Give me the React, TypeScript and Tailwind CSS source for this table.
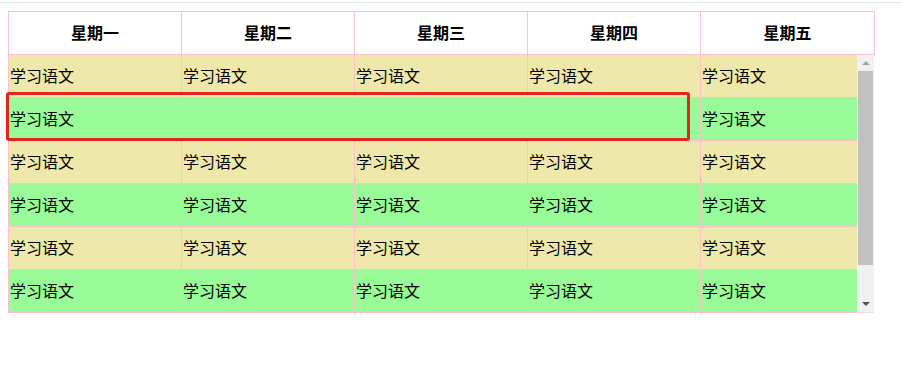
import React from "react";

const days = ["星期一", "星期二", "星期三", "星期四", "星期五"];
const beige = "bg-[#eee8aa]";
const green = "bg-[#98fb98]";

function Cell({ w, children }: { w: string; children?: React.ReactNode }) {
  return (
    <div className={`${w} h-full border-r border-[#ffc0cb] flex items-center pl-[1px] pb-[2px] shrink-0`}>
      {children}
    </div>
  );
}

export default function App() {
  const rows = [0, 1, 2, 3, 4, 5];
  return (
    <div
      className="w-[902px] h-[368px] bg-white text-black"
      style={{ fontFamily: '"Noto Sans CJK SC", "Noto Sans", sans-serif' }}
    >
      <div className="h-px mt-[2px] bg-[#e6e6e6]" />
      <div className="relative ml-[8px] mt-[8px] w-[867px] border-l border-t border-[#ffc0cb]">
        {/* header */}
        <div className="flex h-[43px] border-b border-[#ffc0cb] bg-white">
          {days.map((d, i) => (
            <div
              key={d}
              className={`${i === 4 ? "w-[174px]" : "w-[173px]"} h-full border-r border-[#ffc0cb] flex items-center justify-center pb-[2px] font-bold text-[16px] shrink-0`}
            >
              {d}
            </div>
          ))}
        </div>
        {/* body */}
        <div className="flex">
          <div className="flex flex-col w-[848px]">
            {rows.map((r) => (
              <div
                key={r}
                className={`flex h-[43px] border-b border-[#ffc0cb] text-[16px] ${r % 2 === 0 ? beige : green}`}
              >
                {r === 1 ? (
                  <>
                    <Cell w="w-[692px]">学习语文</Cell>
                    <div className="w-[156px] h-full flex items-center pl-[1px] pb-[2px]">学习语文</div>
                  </>
                ) : (
                  <>
                    <Cell w="w-[173px]">学习语文</Cell>
                    <Cell w="w-[173px]">学习语文</Cell>
                    <Cell w="w-[173px]">学习语文</Cell>
                    <Cell w="w-[173px]">学习语文</Cell>
                    <div className="w-[156px] h-full flex items-center pl-[1px] pb-[2px]">学习语文</div>
                  </>
                )}
              </div>
            ))}
          </div>
          <div className="w-[17px] h-[258px] bg-[#f1f1f1] flex flex-col items-center border-b border-[#f5dde2]">
            <div className="h-[16px] w-full flex items-center justify-center">
              <div className="w-0 h-0 border-l-[4px] border-r-[4px] border-b-[4px] border-l-transparent border-r-transparent border-b-[#a3a3a3]" />
            </div>
            <div className="w-[15px] h-[194px] bg-[#c1c1c1]" />
            <div className="flex-1" />
            <div className="h-[16px] w-full flex items-center justify-center">
              <div className="w-0 h-0 border-l-[4px] border-r-[4px] border-t-[4px] border-l-transparent border-r-transparent border-t-[#505050]" />
            </div>
          </div>
        </div>
        {/* highlight box */}
        <div className="absolute left-[-3px] top-[80px] w-[684px] h-[49px] border-[3px] border-[#e3261d] rounded-[3px]" />
      </div>
    </div>
  );
}
